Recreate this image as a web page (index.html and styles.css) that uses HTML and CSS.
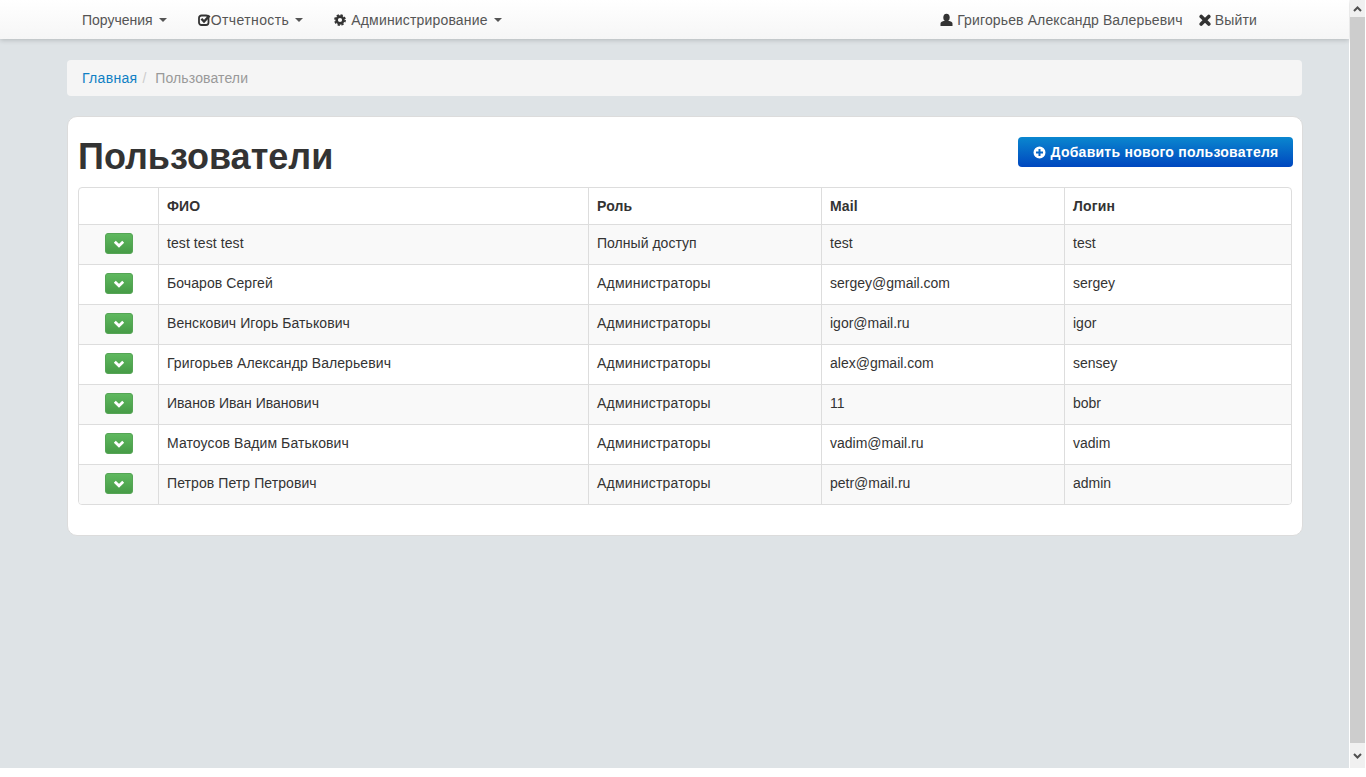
FILE: index.html
```html
<!DOCTYPE html>
<html lang="ru">
<head>
    <meta charset="UTF-8">
    <meta name="viewport" content="width=device-width, initial-scale=1.0">
    <title>Пользователи</title>
    <link rel="stylesheet" href="styles.css">
</head>
<body>
    <div class="window">
        <div class="page">
            <nav class="navbar">
                <ul class="nav-left">
                    <li class="nav-first"><span>Поручения</span><i class="caret"></i></li>
                    <li class="nav-second">
                        <svg class="icon" width="13" height="14" viewBox="0 0 13 14"><rect x="1" y="2.5" width="9.5" height="9.5" rx="2.5" fill="none" stroke="#333" stroke-width="1.8"/><path d="M3.4 5.800l2.600 2.800 5.600-6" fill="none" stroke="#333" stroke-width="2.4"/></svg><span class="spaced">Отчетность</span><i class="caret"></i>
                    </li>
                    <li class="nav-third">
                        <svg class="icon icon-gap" width="12" height="14" viewBox="0 0 12 12"><circle cx="6" cy="6" r="3.4" fill="none" stroke="#333" stroke-width="2.6"/><circle cx="6" cy="6" r="5.1" fill="none" stroke="#333" stroke-width="1.6" stroke-dasharray="2.3 1.7"/></svg><span class="spaced-sm">Администрирование</span><i class="caret"></i>
                    </li>
                </ul>
                <ul class="nav-right">
                    <li>
                        <svg class="icon icon-gap" width="13" height="14" viewBox="0 0 13 14"><ellipse cx="6.5" cy="4.6" rx="3.2" ry="3.8" fill="#333"/><path d="M0.5 13v-2.4c0-1.6 2-2.2 3.8-2.8h4.4c1.800 0.600 3.800 1.200 3.800 2.800v2.400z" fill="#333"/></svg><span class="spaced-xs">Григорьев Александр Валерьевич</span>
                    </li>
                    <li>
                        <svg class="icon icon-gap" width="12" height="14" viewBox="0 0 12 14"><path d="M2.200 3.500l7.600 7.600M9.800 3.500l-7.600 7.600" fill="none" stroke="#333" stroke-width="3.600" stroke-linecap="round"/></svg><span class="spaced-sm">Выйти</span>
                    </li>
                </ul>
            </nav>

            <div class="container">
                <ol class="breadcrumb">
                    <li><a href="#">Главная</a></li>
                    <li class="crumb-sep">/</li>
                    <li class="crumb-active">Пользователи</li>
                </ol>

                <div class="panel">
                    <div class="panel-head">
                        <h1>Пользователи</h1>
                        <button class="btn-add">
                            <svg width="13" height="13" viewBox="0 0 13 13"><path fill-rule="evenodd" fill="#fff" d="M6.500 0.500a6 6 0 1 0 0 12a6 6 0 1 0 0-12zM5.500 3h2v2.500h2.500v2h-2.500v2.500h-2v-2.500h-2.500v-2h2.500z"/></svg>
                            Добавить нового пользователя
                        </button>
                    </div>

                    <div class="table-wrap">
                        <table class="users">
                            <thead>
                                <tr>
                                    <th class="col-btn"></th>
                                    <th class="col-name">ФИО</th>
                                    <th class="col-role">Роль</th>
                                    <th class="col-mail">Mail</th>
                                    <th>Логин</th>
                                </tr>
                            </thead>
                            <tbody>
                                <tr>
                                    <td class="cell-btn"><button class="btn-open"><svg width="12" height="8" viewBox="0 0 12 8"><path d="M1.800 1.800l4.200 4 4.200-4" fill="none" stroke="#fff" stroke-width="2.800"/></svg></button></td>
                                    <td class="cell-name">test test test</td>
                                    <td class="cell-full">Полный доступ</td>
                                    <td>test</td>
                                    <td>test</td>
                                </tr>
                                <tr>
                                    <td class="cell-btn"><button class="btn-open"><svg width="12" height="8" viewBox="0 0 12 8"><path d="M1.800 1.800l4.200 4 4.200-4" fill="none" stroke="#fff" stroke-width="2.800"/></svg></button></td>
                                    <td class="cell-name">Бочаров Сергей</td>
                                    <td class="cell-role">Администраторы</td>
                                    <td>sergey@gmail.com</td>
                                    <td>sergey</td>
                                </tr>
                                <tr>
                                    <td class="cell-btn"><button class="btn-open"><svg width="12" height="8" viewBox="0 0 12 8"><path d="M1.800 1.800l4.200 4 4.200-4" fill="none" stroke="#fff" stroke-width="2.800"/></svg></button></td>
                                    <td class="cell-name">Венскович Игорь Батькович</td>
                                    <td class="cell-role">Администраторы</td>
                                    <td>igor@mail.ru</td>
                                    <td>igor</td>
                                </tr>
                                <tr>
                                    <td class="cell-btn"><button class="btn-open"><svg width="12" height="8" viewBox="0 0 12 8"><path d="M1.800 1.800l4.200 4 4.200-4" fill="none" stroke="#fff" stroke-width="2.800"/></svg></button></td>
                                    <td class="cell-name">Григорьев Александр Валерьевич</td>
                                    <td class="cell-role">Администраторы</td>
                                    <td>alex@gmail.com</td>
                                    <td>sensey</td>
                                </tr>
                                <tr>
                                    <td class="cell-btn"><button class="btn-open"><svg width="12" height="8" viewBox="0 0 12 8"><path d="M1.800 1.800l4.200 4 4.200-4" fill="none" stroke="#fff" stroke-width="2.800"/></svg></button></td>
                                    <td>Иванов Иван Иванович</td>
                                    <td class="cell-role">Администраторы</td>
                                    <td>11</td>
                                    <td>bobr</td>
                                </tr>
                                <tr>
                                    <td class="cell-btn"><button class="btn-open"><svg width="12" height="8" viewBox="0 0 12 8"><path d="M1.800 1.800l4.200 4 4.200-4" fill="none" stroke="#fff" stroke-width="2.800"/></svg></button></td>
                                    <td class="cell-name">Матоусов Вадим Батькович</td>
                                    <td class="cell-role">Администраторы</td>
                                    <td>vadim@mail.ru</td>
                                    <td>vadim</td>
                                </tr>
                                <tr>
                                    <td class="cell-btn"><button class="btn-open"><svg width="12" height="8" viewBox="0 0 12 8"><path d="M1.800 1.800l4.200 4 4.200-4" fill="none" stroke="#fff" stroke-width="2.800"/></svg></button></td>
                                    <td class="cell-name">Петров Петр Петрович</td>
                                    <td class="cell-role">Администраторы</td>
                                    <td>petr@mail.ru</td>
                                    <td>admin</td>
                                </tr>
                            </tbody>
                        </table>
                    </div>
                </div>
            </div>
        </div>

        <div class="scrollbar">
            <div class="scroll-btn scroll-up"><svg width="9" height="6" viewBox="0 0 9 6"><path d="M1 5l3.500-3.500 3.500 3.500" fill="none" stroke="#505050" stroke-width="2"/></svg></div>
            <div class="scroll-thumb"></div>
            <div class="scroll-btn scroll-down"><svg width="9" height="6" viewBox="0 0 9 6"><path d="M1 1l3.500 3.500 3.500-3.500" fill="none" stroke="#505050" stroke-width="2"/></svg></div>
        </div>
    </div>
</body>
</html>
```

FILE: styles.css
```css
html, body {
    margin: 0;
    padding: 0;
    background-color: #fff;
}
body {
    font-family: "Liberation Sans", Arial, sans-serif;
    font-size: 14px;
    line-height: 20px;
    color: #333;
    overflow: hidden;
}
ul, ol {
    list-style: none;
    margin: 0;
    padding: 0;
}
.window {
    display: flex;
    height: 768px;
    width: 1365px;
}
.page {
    flex: 1;
    background-color: #dee3e6;
    min-width: 0;
}
.spaced {
    letter-spacing: 0.4px;
}
.spaced-sm {
    letter-spacing: 0.17px;
}
.spaced-xs {
    letter-spacing: 0.13px;
}

/* верхнее меню */
.navbar {
    display: flex;
    justify-content: space-between;
    height: 39px;
    padding: 0 92px 0 82px;
    background: linear-gradient(to bottom, #fff 0, #f6f6f6 100%);
    box-shadow: 0 1px 5px rgba(0, 0, 0, 0.2);
    color: #555;
}
.nav-left, .nav-right {
    display: flex;
    align-items: center;
}
.nav-left li, .nav-right li {
    display: flex;
    align-items: center;
}
.nav-first {
    margin-right: 31px;
}
.nav-second {
    margin-right: 31px;
}
.nav-third .icon-gap {
    margin-right: 5px;
}
.nav-right li + li {
    margin-left: 16px;
}
.icon {
    display: block;
}
.icon-gap {
    margin-right: 4px;
}
.caret {
    display: inline-block;
    width: 0;
    height: 0;
    margin-left: 6px;
    border-top: 4px solid #555;
    border-left: 4px solid transparent;
    border-right: 4px solid transparent;
}

.container {
    padding: 21px 47px 0 67px;
}
.breadcrumb {
    display: flex;
    height: 36px;
    align-items: center;
    padding: 0 15px;
    background-color: #f5f5f5;
    border-radius: 4px;
}
.breadcrumb a {
    color: #0f7fc4;
    text-decoration: none;
    letter-spacing: 0.3px;
}
.crumb-sep {
    padding: 0 5px;
    color: #ccc;
}
.crumb-active {
    color: #999;
    margin-left: 4px;
    letter-spacing: 0.12px;
}

/* панель */
.panel {
    margin: 20px -1px 0 0;
    height: 420px;
    box-sizing: border-box;
    padding: 0 10px;
    background-color: #fff;
    border: 1px solid #dcdcdc;
    border-radius: 10px;
}
.panel-head {
    display: flex;
    justify-content: space-between;
    align-items: flex-start;
    height: 70px;
}
h1 {
    margin: 20px 0 0;
    font-size: 36px;
    line-height: 40px;
    font-weight: bold;
    color: #333;
}
.btn-add {
    display: flex;
    align-items: center;
    justify-content: center;
    gap: 5px;
    width: 275px;
    height: 30px;
    margin: 20px -1px 0 0;
    padding: 0;
    border: none;
    border-radius: 4px;
    background: linear-gradient(to bottom, #0a87cf 0, #0047bf 100%);
    color: #fff;
    font-family: inherit;
    font-size: 14px;
    font-weight: bold;
    letter-spacing: 0.25px;
}

/* таблица */
.table-wrap {
    border: 1px solid #ddd;
    border-radius: 4px;
    width: 1212px;
    overflow: hidden;
}
.users {
    width: 100%;
    border-collapse: collapse;
    table-layout: fixed;
}
.users th, .users td {
    padding: 0 8px;
    text-align: left;
    border-left: 1px solid #ddd;
    border-top: 1px solid #ddd;
}
.users th:first-child, .users td:first-child {
    border-left: none;
}
.users th {
    height: 36px;
    border-top: none;
    font-weight: bold;
    letter-spacing: 0.15px;
}
.users td {
    height: 40px;
    box-sizing: border-box;
    padding-top: 8px;
    vertical-align: top;
}
.users tbody tr:last-child td {
    height: 39px;
}
.users tbody tr:nth-child(odd) {
    background-color: #f9f9f9;
}
.col-btn {
    width: 63px;
}
.col-name {
    width: 413px;
}
.col-role {
    width: 216px;
}
.col-mail {
    width: 226px;
}
.cell-name {
    letter-spacing: 0.08px;
}
.cell-role {
    letter-spacing: 0.2px;
}
.cell-full {
    letter-spacing: 0.03px;
}
.users .cell-btn {
    text-align: center;
}
.btn-open {
    display: flex;
    align-items: center;
    justify-content: center;
    width: 28px;
    height: 21px;
    margin: 0 auto;
    padding: 0;
    border: 1px solid #55a555;
    border-radius: 3px;
    background: linear-gradient(to bottom, #5fb85f 0, #479c47 100%);
}

/* полоса прокрутки */
.scrollbar {
    display: flex;
    flex-direction: column;
    width: 15px;
    margin-left: 1px;
    background-color: #f0f0f0;
}
.scroll-btn {
    display: flex;
    align-items: center;
    justify-content: center;
}
.scroll-up {
    height: 17px;
}
.scroll-thumb {
    flex: 1;
    background-color: #cdcdcd;
}
.scroll-down {
    height: 25px;
}
```
